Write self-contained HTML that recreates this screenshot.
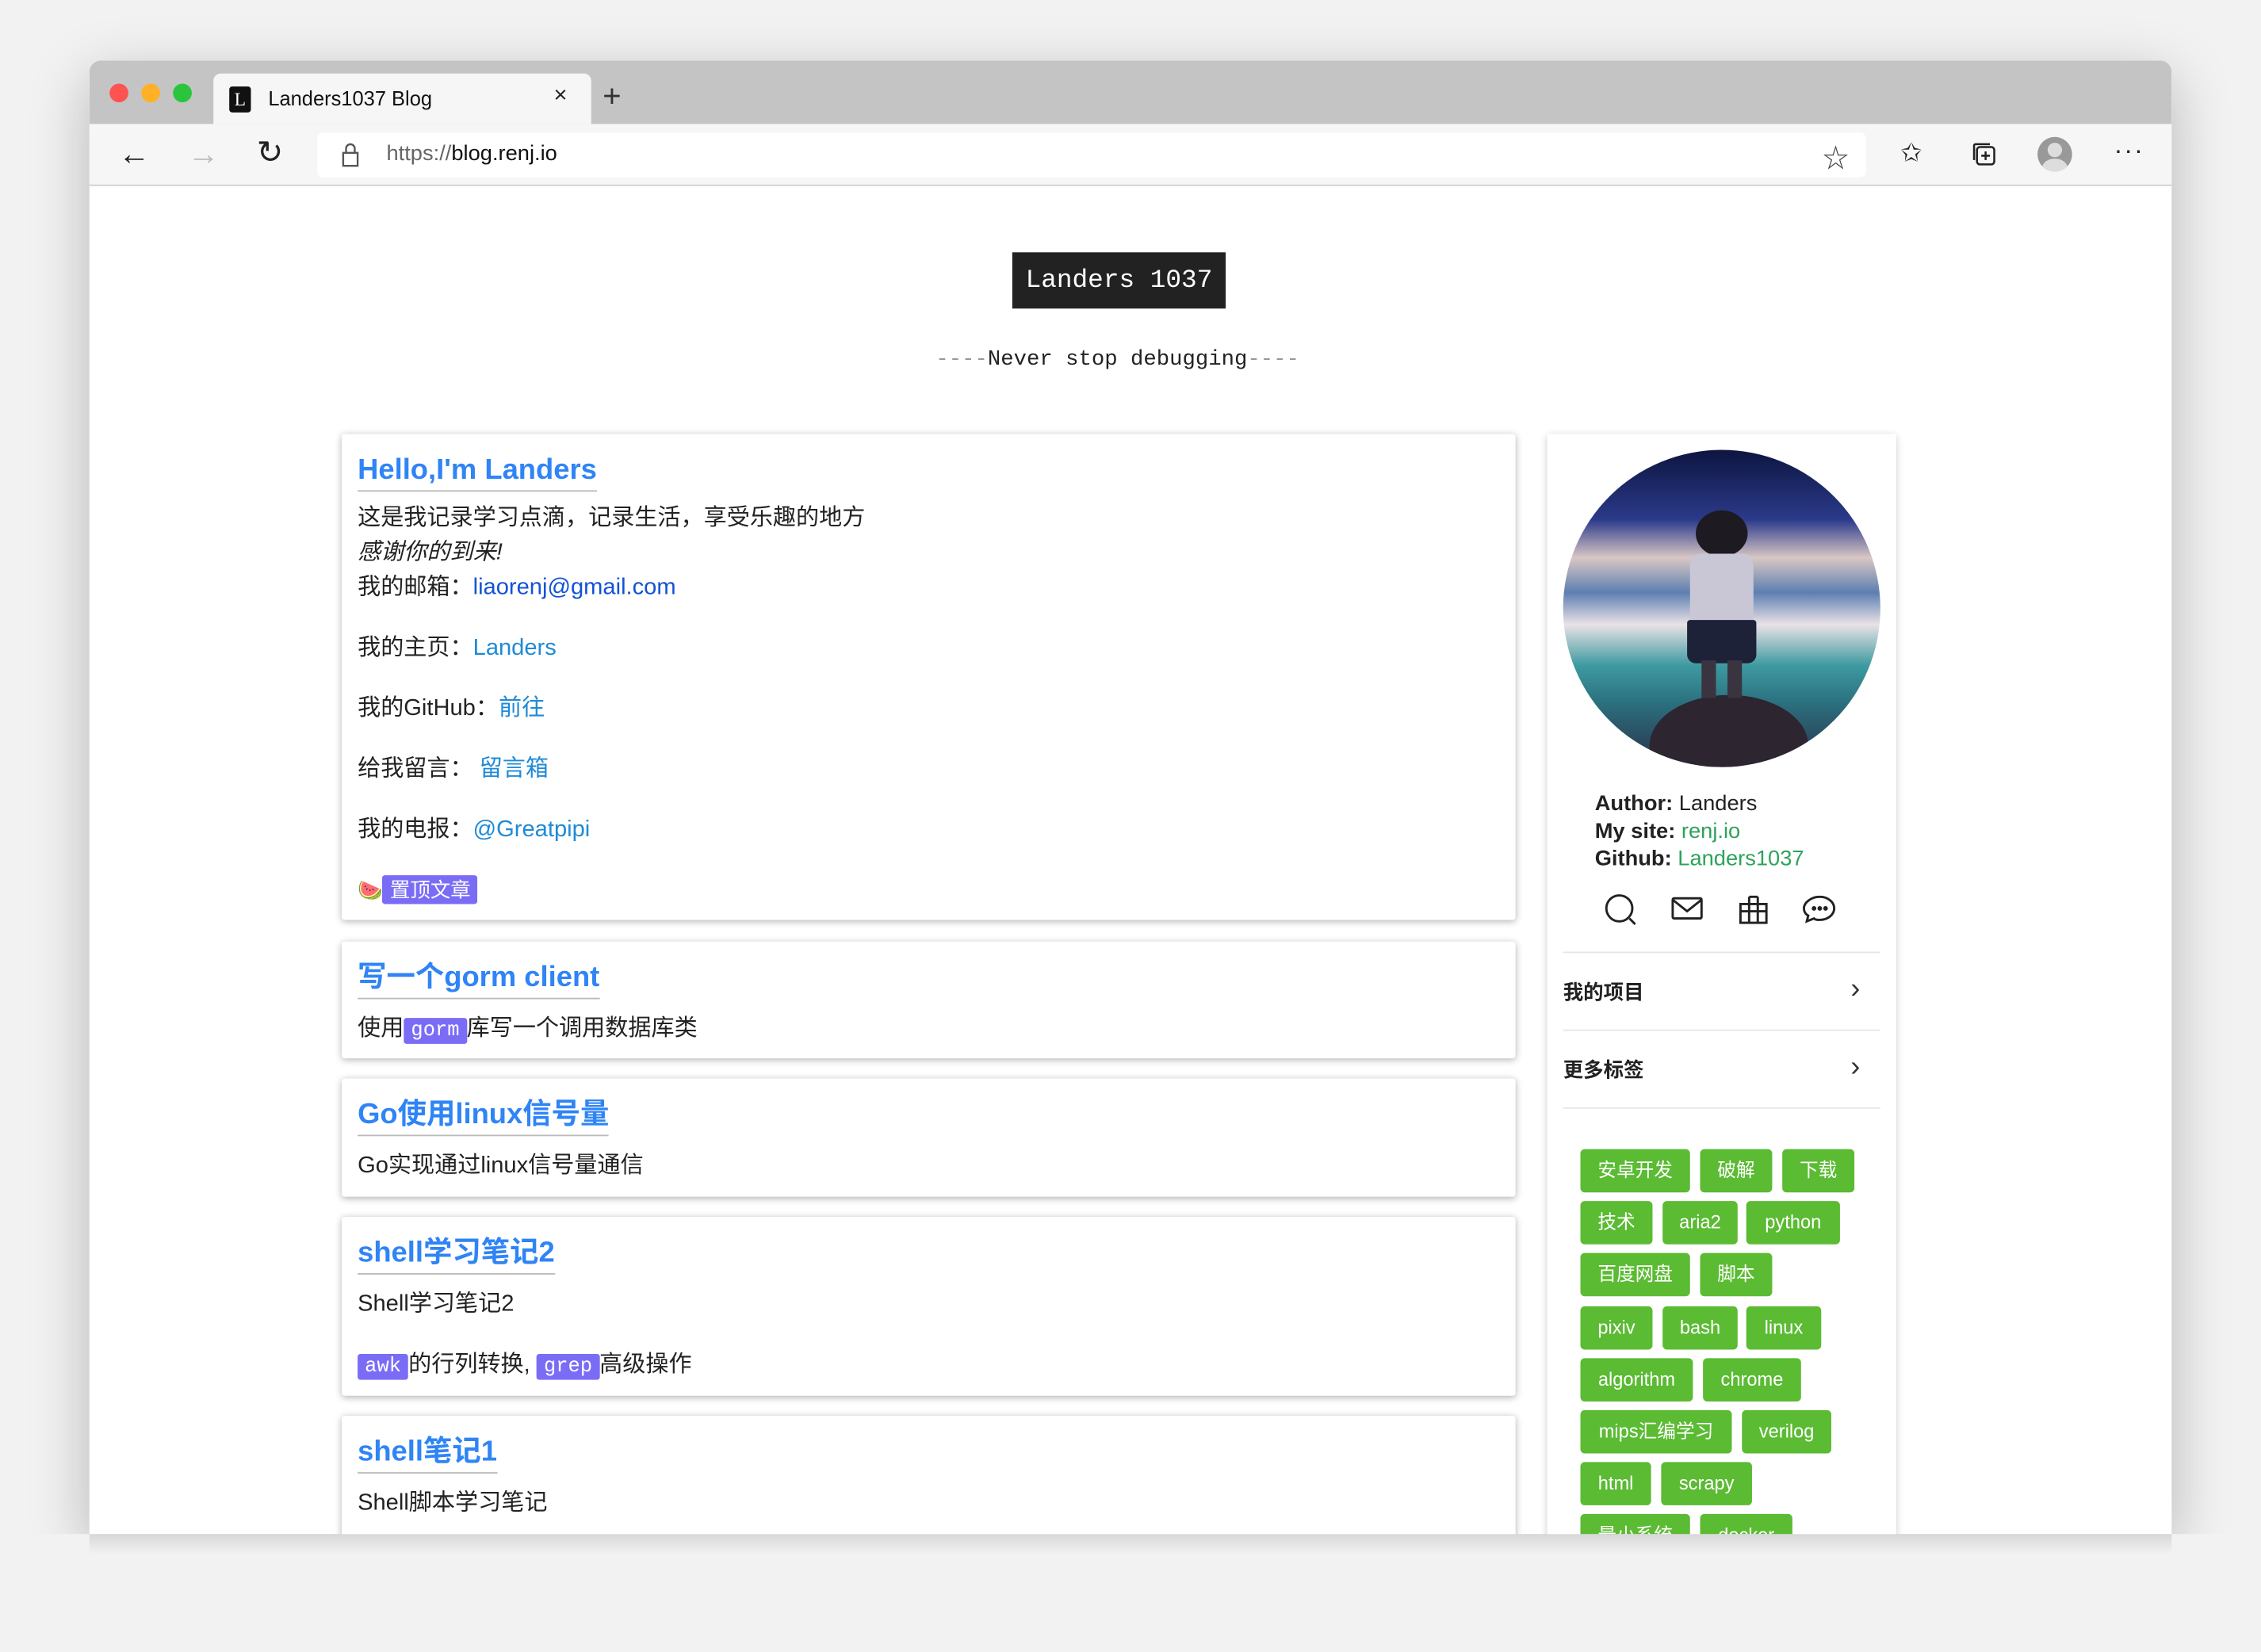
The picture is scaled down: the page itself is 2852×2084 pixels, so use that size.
<!DOCTYPE html>
<html><head><meta charset="utf-8"><style>
html,body{margin:0;padding:0;width:2852px;height:2084px;overflow:hidden;background:#f2f2f2;}
#s{position:absolute;left:0;top:0;width:1568px;height:1146px;transform:scale(1.8189);transform-origin:0 0;font-family:"Liberation Sans","Noto Sans CJK SC",sans-serif;color:#222;}
.a{position:absolute;}
.win{left:62px;top:42px;width:1444px;height:1022px;background:#fff;border-radius:8px 8px 0 0;box-shadow:0 12px 40px rgba(0,0,0,.25);overflow:hidden;}
.card{position:absolute;left:237px;width:814px;background:#fff;box-shadow:0 1px 5px rgba(0,0,0,.3);border-radius:2px;}
.card h2{margin:0;position:absolute;left:11px;top:13px;font-size:20px;color:#2f84f6;font-weight:bold;border-bottom:1.5px solid #bbb;padding-bottom:2px;line-height:24px;}
.t{position:absolute;left:11px;font-size:16px;line-height:20px;color:#222;white-space:nowrap;}
.lk{color:#1f8ad6;}
.code{background:#7b6cf6;color:#fff;font-family:"Liberation Mono",monospace;font-size:14px;padding:1px 5px;border-radius:2px;}
.tag{position:absolute;height:30px;background:#5bbb33;color:#fff;font-size:13px;line-height:30px;text-align:center;border-radius:3px;}
.row{position:absolute;left:1084px;width:220px;font-size:14px;font-weight:bold;color:#222;}
.row span{position:absolute;right:14px;top:-3px;font-weight:normal;font-size:20px;color:#333}
</style></head><body><div id="s">
<div class="a win">
 <div class="a" style="left:0;top:0;width:1444px;height:44px;background:#c4c4c4"></div>
 <div class="a" style="left:0;top:44px;width:1444px;height:42px;background:#f6f6f6;border-bottom:1px solid #cfcfcf"></div>
 <div class="a" style="left:14px;top:16px;width:13px;height:13px;border-radius:50%;background:#fe5351"></div>
 <div class="a" style="left:36px;top:16px;width:13px;height:13px;border-radius:50%;background:#feb126"></div>
 <div class="a" style="left:58px;top:16px;width:13px;height:13px;border-radius:50%;background:#2ac53d"></div>
 <div class="a" style="left:86px;top:9px;width:262px;height:35px;background:#f6f6f6;border-radius:5px 5px 0 0"></div>
 <div class="a" style="left:97px;top:18px;width:15px;height:18px;background:#111;border-radius:2px;color:#fff;font:13px 'Liberation Serif',serif;text-align:center;line-height:18px">L</div>
 <div class="a" style="left:124px;top:18px;font-size:14px;color:#111">Landers1037 Blog</div>
 <div class="a" style="left:322px;top:16px;font-size:16px;color:#222">×</div>
 <div class="a" style="left:356px;top:12px;font-size:22px;color:#333;font-weight:300">+</div>
 <div class="a" style="left:20px;top:52px;font-size:22px;color:#222">←</div>
 <div class="a" style="left:68px;top:52px;font-size:22px;color:#bbb">→</div>
 <div class="a" style="left:116px;top:51px;font-size:22px;color:#222">↻</div>
 <div class="a" style="left:158px;top:50px;width:1074px;height:31px;background:#fff;border-radius:4px"></div>
 <svg class="a" style="left:174px;top:56px" width="14" height="18"><rect x="2" y="8" width="10" height="9" fill="none" stroke="#555" stroke-width="1.3"/><path d="M4 8V5a3 3 0 0 1 6 0v3" fill="none" stroke="#555" stroke-width="1.3"/></svg>
 <div class="a" style="left:206px;top:56px;font-size:15px;color:#666">https://<span style="color:#111">blog.renj.io</span></div>
 <div class="a" style="left:1202px;top:54px;font-size:18px;color:#444">☆</div>
 <div class="a" style="left:1256px;top:54px;font-size:18px;color:#222">✩</div>
 <svg class="a" style="left:1305px;top:56px" width="18" height="18"><rect x="4" y="4" width="12" height="12" rx="2" fill="none" stroke="#222" stroke-width="1.4"/><path d="M2 13V3a1 1 0 0 1 1-1h10M10 7v6M7 10h6" fill="none" stroke="#222" stroke-width="1.4"/></svg>
 <div class="a" style="left:1351px;top:53px;width:24px;height:24px;border-radius:50%;background:#999;overflow:hidden"><div class="a" style="left:7px;top:4px;width:10px;height:10px;border-radius:50%;background:#ddd"></div><div class="a" style="left:3px;top:15px;width:18px;height:14px;border-radius:50%;background:#ddd"></div></div>
 <div class="a" style="left:1404px;top:52px;font-size:18px;color:#222;letter-spacing:1px">···</div>
</div>

<div class="a" style="left:702px;top:175px;width:148px;height:39px;background:#222;color:#fff;font:18px 'Liberation Mono',monospace;text-align:center;line-height:40px">Landers 1037</div>
<div class="a" style="left:525px;top:241px;width:500px;text-align:center;font:15px 'Liberation Mono',monospace;color:#222"><span style="color:#999">----</span>Never stop debugging<span style="color:#999">----</span></div>

<div class="card" style="top:301px;height:337px">
 <h2>Hello,I'm Landers</h2>
 <div class="t" style="top:49px">这是我记录学习点滴，记录生活，享受乐趣的地方</div>
 <div class="t" style="top:73px;font-style:italic">感谢你的到来!</div>
 <div class="t" style="top:97px">我的邮箱：<span style="color:#1352d6">liaorenj@gmail.com</span></div>
 <div class="t" style="top:139px">我的主页：<span class="lk">Landers</span></div>
 <div class="t" style="top:181px">我的GitHub：<span class="lk">前往</span></div>
 <div class="t" style="top:223px">给我留言： <span class="lk">留言箱</span></div>
 <div class="t" style="top:265px">我的电报：<span class="lk">@Greatpipi</span></div>
 <div class="t" style="top:306px;font-size:14px">🍉<span class="code" style="font-family:'Liberation Sans','Noto Sans CJK SC',sans-serif;padding:2px 5px">置顶文章</span></div>
</div>
<div class="card" style="top:653px;height:81px">
 <h2>写一个gorm client</h2>
 <div class="t" style="top:51px">使用<span class="code">gorm</span>库写一个调用数据库类</div>
</div>
<div class="card" style="top:748px;height:82px">
 <h2>Go使用linux信号量</h2>
 <div class="t" style="top:51px">Go实现通过linux信号量通信</div>
</div>
<div class="card" style="top:844px;height:124px">
 <h2>shell学习笔记2</h2>
 <div class="t" style="top:51px">Shell学习笔记2</div>
 <div class="t" style="top:93px"><span class="code">awk</span>的行列转换, <span class="code">grep</span>高级操作</div>
</div>
<div class="card" style="top:982px;height:90px">
 <h2>shell笔记1</h2>
 <div class="t" style="top:51px">Shell脚本学习笔记</div>
</div>

<div class="a" style="left:1073px;top:301px;width:242px;height:780px;background:#fff;box-shadow:0 1px 5px rgba(0,0,0,.2)"></div>
<div class="a" style="left:1084px;top:312px;width:220px;height:220px;border-radius:50%;overflow:hidden;background:linear-gradient(180deg,#0d1540 0%,#2b3a8a 22%,#d8c7c4 34%,#5d7fb0 45%,#e9e2e6 55%,#3d9aa0 68%,#2b6f7e 80%,#2a3048 100%)">
 <div class="a" style="left:60px;top:170px;width:110px;height:70px;border-radius:50% 50% 0 0;background:#2d2530"></div>
 <div class="a" style="left:92px;top:42px;width:36px;height:32px;border-radius:50%;background:#1d1a22"></div>
 <div class="a" style="left:88px;top:72px;width:44px;height:50px;background:#c9c6d6;border-radius:8px 8px 2px 2px"></div>
 <div class="a" style="left:86px;top:118px;width:48px;height:30px;background:#1e2238;border-radius:2px 2px 6px 6px"></div>
 <div class="a" style="left:96px;top:146px;width:10px;height:26px;background:#3a3440"></div>
 <div class="a" style="left:114px;top:146px;width:10px;height:26px;background:#3a3440"></div>
</div>
<div class="a" style="left:1106px;top:548px;font-size:15px;line-height:19px;color:#222">
 <b>Author:</b> Landers<br><b>My site:</b> <span style="color:#2ca35b">renj.io</span><br><b>Github:</b> <span style="color:#2ca35b">Landers1037</span>
</div>
<svg class="a" style="left:1110px;top:618px" width="170" height="26" fill="none" stroke="#222" stroke-width="1.6">
 <circle cx="13" cy="12" r="9"/><path d="M20 19l4 4"/>
 <rect x="50" y="5" width="20" height="14" rx="1"/><path d="M50 6l10 8 10-8"/>
 <rect x="97" y="9" width="18" height="13"/><path d="M97 14h18M103 4v18M109 4v18M103 4h6"/>
 <path d="M152 4c6 0 10 4 10 8s-4 8-10 8c-2 0-3 0-4-1l-5 2 1-4c-2-1-3-3-3-5 0-4 5-8 11-8z"/><circle cx="148" cy="12" r=".8" fill="#222"/><circle cx="152" cy="12" r=".8" fill="#222"/><circle cx="156" cy="12" r=".8" fill="#222"/>
</svg>
<div class="a" style="left:1084px;top:660px;width:220px;border-top:1px solid #e6e6e6"></div>
<div class="row" style="top:678px">我的项目<span>›</span></div>
<div class="a" style="left:1084px;top:714px;width:220px;border-top:1px solid #e6e6e6"></div>
<div class="row" style="top:732px">更多标签<span>›</span></div>
<div class="a" style="left:1084px;top:768px;width:220px;border-top:1px solid #e6e6e6"></div>

<div class="tag" style="left:1096px;top:797px;width:76px">安卓开发</div>
<div class="tag" style="left:1179px;top:797px;width:50px">破解</div>
<div class="tag" style="left:1236px;top:797px;width:50px">下载</div>
<div class="tag" style="left:1096px;top:833px;width:50px">技术</div>
<div class="tag" style="left:1153px;top:833px;width:52px">aria2</div>
<div class="tag" style="left:1211px;top:833px;width:65px">python</div>
<div class="tag" style="left:1096px;top:869px;width:76px">百度网盘</div>
<div class="tag" style="left:1179px;top:869px;width:50px">脚本</div>
<div class="tag" style="left:1096px;top:906px;width:50px">pixiv</div>
<div class="tag" style="left:1153px;top:906px;width:52px">bash</div>
<div class="tag" style="left:1211px;top:906px;width:52px">linux</div>
<div class="tag" style="left:1096px;top:942px;width:78px">algorithm</div>
<div class="tag" style="left:1181px;top:942px;width:68px">chrome</div>
<div class="tag" style="left:1096px;top:978px;width:105px">mips汇编学习</div>
<div class="tag" style="left:1208px;top:978px;width:62px">verilog</div>
<div class="tag" style="left:1096px;top:1014px;width:49px">html</div>
<div class="tag" style="left:1152px;top:1014px;width:63px">scrapy</div>
<div class="tag" style="left:1096px;top:1050px;width:76px">最小系统</div>
<div class="tag" style="left:1179px;top:1050px;width:64px">docker</div>

<div class="a" style="left:0;top:1064px;width:1568px;height:82px;background:#f2f2f2"></div>
<div class="a" style="left:62px;top:1064px;width:1444px;height:14px;background:linear-gradient(#d8d8d8,#f2f2f2)"></div>
</div></body></html>
